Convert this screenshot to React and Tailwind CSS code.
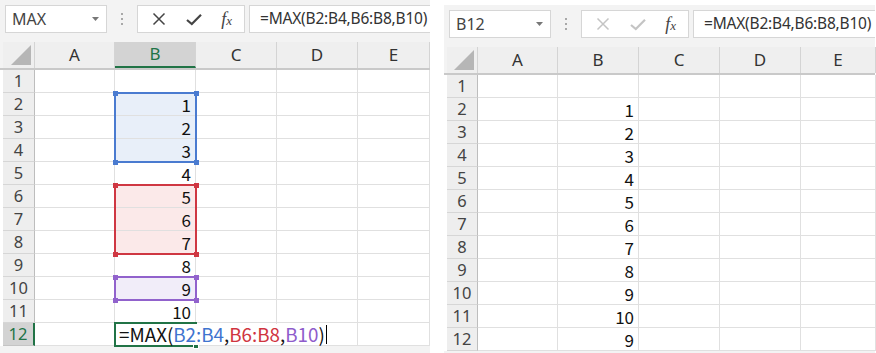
import React from 'react';

const COLS = ['A', 'B', 'C', 'D', 'E'];
const ROWS = [1, 2, 3, 4, 5, 6, 7, 8, 9, 10, 11, 12];

const cellFont = { fontFamily: '"Noto Sans CJK JP", "Noto Sans", sans-serif' };

// ── Toolbar (name box + formula bar) ───────────────────────────────────────
function Toolbar({ name, active }) {
  const iconColor = active ? '#444444' : '#c4c4c4';
  return (
    <div className="h-[42px] flex items-start pt-[5px] pl-[5px]">
      <div className="w-[102px] h-[28px] bg-white border border-[#d6d6d6] flex items-center justify-between pl-[6px] pr-[7px]">
        <span className="text-[16px] text-[#444] font-['Noto_Sans',sans-serif]">{name}</span>
        <svg width="7" height="4" viewBox="0 0 7 4"><path d="M0 0h7L3.5 4z" fill="#777" /></svg>
      </div>
      <div className="w-[30px] h-[28px] flex flex-col items-center justify-center gap-[3px]">
        <span className="w-[2px] h-[2px] bg-[#a8a8a8]" />
        <span className="w-[2px] h-[2px] bg-[#a8a8a8]" />
        <span className="w-[2px] h-[2px] bg-[#a8a8a8]" />
      </div>
      <div className="w-[108px] h-[28px] bg-white border border-[#d6d6d6] flex items-center justify-around pl-[4px] pr-[2px]">
        <svg width="14" height="14" viewBox="0 0 14 14">
          <path d="M1.5 1.5L12.5 12.5M12.5 1.5L1.5 12.5" stroke={iconColor} strokeWidth="1.5" fill="none" />
        </svg>
        <svg width="16" height="13" viewBox="0 0 16 13">
          <path d="M1 7L5.8 11L15 1.8" stroke={iconColor} strokeWidth="2.2" fill="none" />
        </svg>
        <span className="text-[18px] italic text-[#444] font-['Liberation_Serif',serif] leading-none">
          f<span className="text-[13px]">x</span>
        </span>
      </div>
      <div className="flex-1 h-[28px] ml-[4px] bg-white border border-[#d6d6d6] border-r-0 flex items-center pl-[10px]">
        <span className="text-[15.5px] text-[#333] whitespace-nowrap font-['Noto_Sans',sans-serif] tracking-[-0.2px]">
          =MAX(B2:B4,B6:B8,B10)
        </span>
      </div>
    </div>
  );
}

// ── Column header row ──────────────────────────────────────────────────────
function HeaderRow({ widths, selCol }) {
  return (
    <div className="flex h-[28px] pl-[3px] border-b-2 border-[#c9c9c9]">
      <div style={{ width: widths[0] }} className="shrink-0 bg-[#efefef] border-r border-[#d4d4d4] flex items-end justify-end pr-[3px] pb-[3px]">
        <svg width="20" height="20" viewBox="0 0 20 20"><path d="M20 0V20H0z" fill="#b6b6b6" /></svg>
      </div>
      {COLS.map((c, i) => (
        <div key={c} style={{ width: widths[i + 1] }}
          className={`shrink-0 flex items-center justify-center text-[17px] font-['Noto_Sans',sans-serif] border-r border-[#d4d4d4] ${
            selCol === c ? 'bg-[#d3d3d3] text-[#217346] border-b-2 border-b-[#217346]' : 'bg-[#efefef] text-[#333]'}`}>
          {c}
        </div>
      ))}
    </div>
  );
}

// ── Sheet body rows ────────────────────────────────────────────────────────
function BodyRow({ r, widths, value, fill, selRow }) {
  const sel = selRow === r;
  return (
    <div className="flex h-[23px] pl-[3px]">
      <div style={{ width: widths[0] }}
        className={`shrink-0 flex items-center justify-center text-[16.5px] leading-none font-['Noto_Sans',sans-serif] border-b ${
          sel ? 'bg-[#d3d3d3] text-[#217346] border-r-2 border-r-[#217346] border-b-[#c4c4c4]' : 'bg-[#eeeeee] text-[#444] border-r border-r-[#bdbdbd] border-b-[#d6d6d6]'}`}>
        {r}
      </div>
      {COLS.map((c, i) => (
        <div key={c} style={{ width: widths[i + 1], ...cellFont }}
          className={`shrink-0 border-r border-b border-[#e0e0e0] flex items-center justify-end pr-[4px] text-[17px] leading-none text-[#111] ${
            c === 'B' && fill ? fill : 'bg-white'}`}>
          {c === 'B' ? value : ''}
        </div>
      ))}
    </div>
  );
}

function Handle({ className }) {
  return <span className={`absolute w-[5px] h-[5px] ${className}`} />;
}

// ── Left: editing the formula ─────────────────────────────────────────────
function EditingPanel() {
  const widths = [32, 80, 81, 81, 81, 72];
  const fills = { 2: 'bg-[#e8eff9]', 3: 'bg-[#e8eff9]', 4: 'bg-[#e8eff9]', 6: 'bg-[#fbe9e9]', 7: 'bg-[#fbe9e9]', 8: 'bg-[#fbe9e9]', 10: 'bg-[#f1edf9]' };
  return (
    <div className="w-[430px] shrink-0 bg-[#f3f3f3]">
      <Toolbar name="MAX" active />
      <HeaderRow widths={widths} selCol="B" />
      <div className="relative bg-white">
        {ROWS.map(r => (
          <BodyRow key={r} r={r} widths={widths} selRow={12} fill={fills[r]}
            value={r >= 2 && r <= 11 ? r - 1 : ''} />
        ))}

        {/* reference range outlines */}
        <div className="absolute top-[22px] left-[114px] w-[83px] h-[71px] border-2 border-[#4a7bd0] pointer-events-none">
          <Handle className="-top-[3.5px] -left-[3.5px] bg-[#4a7bd0]" />
          <Handle className="-top-[3.5px] -right-[3.5px] bg-[#4a7bd0]" />
          <Handle className="-bottom-[3.5px] -left-[3.5px] bg-[#4a7bd0]" />
          <Handle className="-bottom-[3.5px] -right-[3.5px] bg-[#4a7bd0]" />
        </div>
        <div className="absolute top-[114px] left-[114px] w-[83px] h-[71px] border-2 border-[#cf3742] pointer-events-none">
          <Handle className="-top-[3.5px] -left-[3.5px] bg-[#cf3742]" />
          <Handle className="-top-[3.5px] -right-[3.5px] bg-[#cf3742]" />
          <Handle className="-bottom-[3.5px] -left-[3.5px] bg-[#cf3742]" />
          <Handle className="-bottom-[3.5px] -right-[3.5px] bg-[#cf3742]" />
        </div>
        <div className="absolute top-[206px] left-[114px] w-[83px] h-[25px] border-2 border-[#9162cc] pointer-events-none">
          <Handle className="-top-[3.5px] -left-[3.5px] bg-[#9162cc]" />
          <Handle className="-top-[3.5px] -right-[3.5px] bg-[#9162cc]" />
          <Handle className="-bottom-[3.5px] -left-[3.5px] bg-[#9162cc]" />
          <Handle className="-bottom-[3.5px] -right-[3.5px] bg-[#9162cc]" />
        </div>

        {/* in-cell editor B12 */}
        <div className="absolute top-[252px] left-[114px] w-[83px] h-[25px] border-2 border-[#217346]">
          <span className="absolute -bottom-[4px] -right-[4px] w-[6px] h-[6px] bg-[#217346] border border-white" />
        </div>
        <div style={cellFont}
          className="absolute z-10 top-[254px] left-[116px] h-[21px] flex items-center pl-[3px] pr-[1px] bg-white text-[18.8px] leading-none text-[#111] whitespace-nowrap">
          <span>=MAX(</span>
          <span className="text-[#3f74cf]">B2:B4</span>
          <span>,</span>
          <span className="text-[#d0343f]">B6:B8</span>
          <span>,</span>
          <span className="text-[#8e5ccb]">B10</span>
          <span>)</span>
          <span className="w-px h-[19px] bg-black ml-[1px]" />
        </div>
      </div>
    </div>
  );
}

// ── Right: result after Enter ─────────────────────────────────────────────
function ResultPanel() {
  const widths = [31, 80, 81, 81, 81, 75];
  return (
    <div className="w-[431px] shrink-0 mt-[5px] bg-[#f3f3f3]">
      <Toolbar name="B12" />
      <HeaderRow widths={widths} />
      <div className="bg-white">
        {ROWS.map(r => (
          <BodyRow key={r} r={r} widths={widths}
            value={r === 12 ? 9 : r >= 2 ? r - 1 : ''} />
        ))}
      </div>
    </div>
  );
}

export default function App() {
  return (
    <div className="w-[876px] h-[353px] bg-white flex overflow-hidden">
      <EditingPanel />
      <div className="w-[14px] shrink-0" />
      <ResultPanel />
    </div>
  );
}
